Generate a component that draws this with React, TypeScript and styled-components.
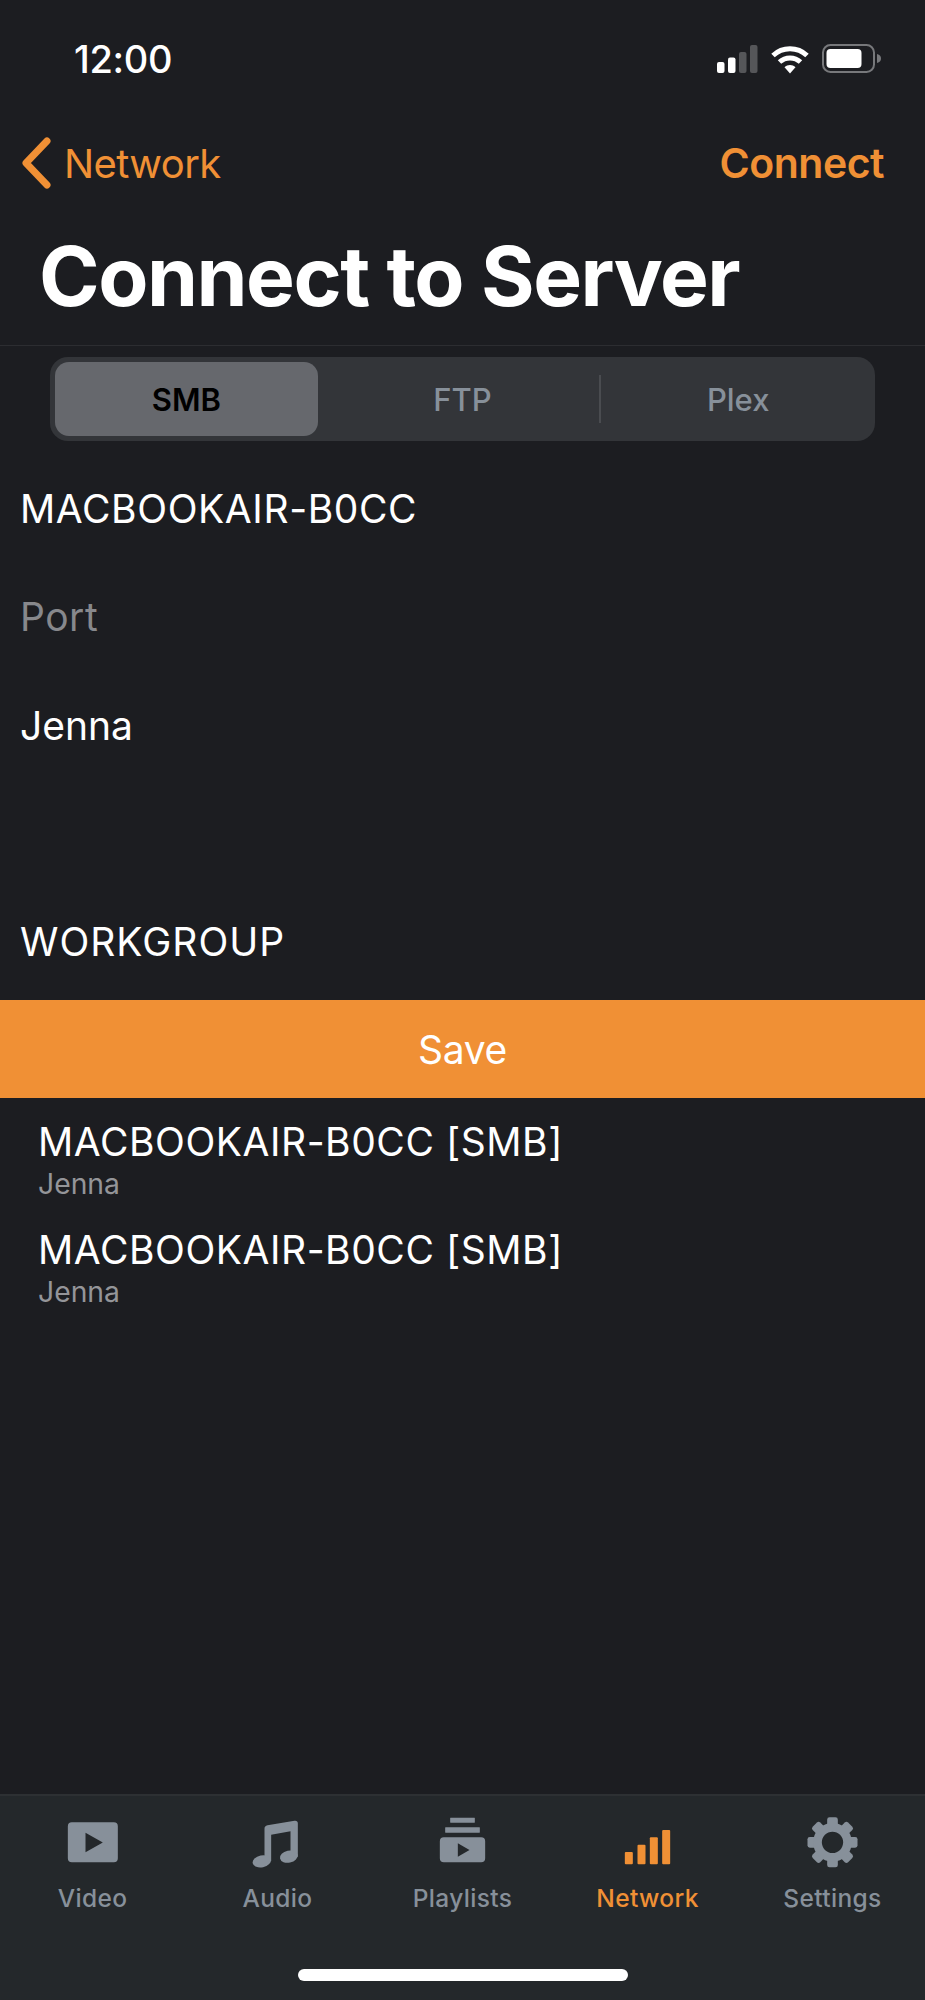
import React from "react";
import styled, { createGlobalStyle } from "styled-components";

const Global = createGlobalStyle`
  html, body { margin: 0; padding: 0; background: #1c1d21; }
  * { box-sizing: border-box; }
`;

const ORANGE = "#f09035";
const GRAY = "#87909a";
const FONT = `Inter, "Liberation Sans", sans-serif`;

const Screen = styled.div`
  width: 925px;
  height: 2000px;
  background: #1c1d21;
  color: #fff;
  font-family: ${FONT};
  display: flex;
  flex-direction: column;
  overflow: hidden;
`;

const StatusBar = styled.div`
  height: 117px;
  padding: 0 43px 0 74px;
  display: flex;
  align-items: center;
  justify-content: space-between;
`;

const Time = styled.span`
  font-size: 38px;
  font-weight: 500;
  letter-spacing: -0.3px;
  line-height: 1;
`;

const StatusIcons = styled.div`
  display: flex;
  align-items: center;
  gap: 13px;
`;

const NavBar = styled.div`
  height: 92px;
  padding: 0 41px 0 21px;
  display: flex;
  align-items: center;
  justify-content: space-between;
`;

const Back = styled.div`
  display: flex;
  align-items: center;
  gap: 13px;
  color: ${ORANGE};
  font-size: 40px;
  font-weight: 400;
  letter-spacing: -0.6px;
`;

const Action = styled.div`
  color: ${ORANGE};
  font-size: 41px;
  font-weight: 600;
  letter-spacing: -0.5px;
`;

const TitleBar = styled.div`
  height: 137px;
  padding: 0 0 0 39px;
  display: flex;
  align-items: center;
  border-bottom: 1px solid #2c2d31;
`;

const Title = styled.h1`
  margin: 0;
  font-size: 82px;
  font-weight: 700;
  letter-spacing: -1.5px;
  line-height: 1;
`;

const Segmented = styled.div`
  margin: 11px 50px 0;
  height: 84px;
  padding: 5px;
  border-radius: 18px;
  background: #333539;
  display: grid;
  grid-template-columns: repeat(3, 1fr);
`;

const Segment = styled.div<{ $active?: boolean; $divided?: boolean }>`
  position: relative;
  display: flex;
  align-items: center;
  justify-content: center;
  margin-right: ${(p) => (p.$active ? "9px" : "0")};
  padding-left: ${(p) => (p.$divided ? "8px" : "0")};
  font-size: 31px;
  font-weight: ${(p) => (p.$active ? 600 : 500)};
  color: ${(p) => (p.$active ? "#000" : GRAY)};
  background: ${(p) => (p.$active ? "#66686d" : "transparent")};
  border-radius: 14px;
  ${(p) =>
    p.$divided
      ? `&::before { content: ""; position: absolute; left: 1px; top: 13px; bottom: 13px; width: 2px; background: #4a4c50; }`
      : ""}
`;

const Form = styled.div`
  margin-top: 13.5px;
  padding-bottom: 4.25px;
  display: flex;
  flex-direction: column;
`;

const Field = styled.div<{ $placeholder?: boolean; $tracking?: number }>`
  height: 108.25px;
  padding-left: 20px;
  display: flex;
  align-items: center;
  font-size: 39px;
  font-weight: 400;
  letter-spacing: ${(p) => p.$tracking ?? 0}px;
  color: ${(p) => (p.$placeholder ? "#87888c" : "#fff")};
`;

const SaveBar = styled.div`
  height: 98px;
  background: ${ORANGE};
  display: flex;
  align-items: center;
  justify-content: center;
  font-size: 39px;
  letter-spacing: -0.3px;
`;

const List = styled.div`
  padding-top: 17px;
  display: flex;
  flex-direction: column;
`;

const Row = styled.div`
  height: 108px;
  padding-left: 38px;
  display: flex;
  flex-direction: column;
`;

const RowTitle = styled.div`
  font-size: 39px;
  line-height: 54px;
  letter-spacing: 0.55px;
`;

const RowSub = styled.div`
  font-size: 28.3px;
  line-height: 30px;
  color: #949599;
`;

const TabBar = styled.div`
  margin-top: auto;
  height: 206px;
  background: #24282b;
  border-top: 2px solid #2d3033;
  position: relative;
  display: grid;
  grid-template-columns: repeat(5, 1fr);
  align-items: start;
`;

const Tab = styled.div<{ $active?: boolean }>`
  display: flex;
  flex-direction: column;
  align-items: center;
  color: ${(p) => (p.$active ? ORANGE : GRAY)};
`;

const IconBox = styled.svg`
  width: 56px;
  height: 56px;
  margin-top: 19px;
  display: block;
`;

const TabLabel = styled.span`
  margin-top: 12px;
  font-size: 24.5px;
  font-weight: 500;
  line-height: 30px;
  letter-spacing: 0.35px;
`;

const HomeIndicator = styled.div`
  position: absolute;
  left: 298px;
  bottom: 19px;
  width: 330px;
  height: 12px;
  border-radius: 6px;
  background: #fff;
`;

const Signal = () => (
  <svg width="41" height="28" viewBox="0 0 41 28">
    <rect x="0" y="17" width="7.5" height="11" rx="2" fill="#fff" />
    <rect x="11" y="12.5" width="7.5" height="15.5" rx="2" fill="#fff" />
    <rect x="22" y="7" width="7.5" height="21" rx="2" fill="#555659" />
    <rect x="33" y="0" width="7.5" height="28" rx="2" fill="#555659" />
  </svg>
);

const Wifi = () => (
  <svg width="38" height="30" viewBox="0 0 38 30" fill="none">
    <path d="M2 11.5C11.5 2.5 26.5 2.5 36 11.5" stroke="#fff" strokeWidth="5" />
    <path d="M8.5 18C14.5 12.5 23.5 12.5 29.5 18" stroke="#fff" strokeWidth="5" />
    <path d="M13.5 23.2L19 29.5L24.5 23.2C21.5 20.2 16.5 20.2 13.5 23.2Z" fill="#fff" />
  </svg>
);

const Battery = () => (
  <svg width="60" height="30" viewBox="0 0 60 30" fill="none">
    <rect x="1" y="1" width="51" height="27" rx="7.5" stroke="#77787b" strokeWidth="2" />
    <rect x="4.5" y="5" width="35" height="19" rx="4" fill="#fff" />
    <path d="M55 10C58 10.8 59 12.5 59 14.5S58 18.2 55 19Z" fill="#77787b" />
  </svg>
);

const Chevron = () => (
  <svg width="30" height="52" viewBox="0 0 30 52" fill="none">
    <path d="M26 4L5 26L26 48" stroke={ORANGE} strokeWidth="7" strokeLinecap="round" strokeLinejoin="round" />
  </svg>
);

const VideoIcon = () => (
  <IconBox viewBox="73.5 45 168 168">
    <path
      fillRule="evenodd"
      fill="currentColor"
      d="M94 67H220Q232 67 232 79V175Q232 187 220 187H94Q82 187 82 175V79Q82 67 94 67ZM135 98V157L187 127.5Z"
    />
  </IconBox>
);

const AudioIcon = () => (
  <IconBox viewBox="628.5 45 168 168" fill="currentColor">
    <path d="M672 86Q672 78 681 76L762 62Q772 61 772 70V170H750V94L692 104V183H672Z" />
    <ellipse cx="664" cy="184" rx="28" ry="18" transform="rotate(-12 664 184)" />
    <ellipse cx="745" cy="170" rx="27" ry="18" transform="rotate(-12 745 170)" />
  </IconBox>
);

const PlaylistIcon = () => (
  <IconBox viewBox="1183.5 45 168 168" fill="currentColor">
    <rect x="1229" y="53" width="74" height="15" rx="1" />
    <rect x="1214" y="82" width="104" height="16" rx="1" />
    <path
      fillRule="evenodd"
      d="M1210 112H1322Q1334 112 1334 124V175Q1334 187 1322 187H1210Q1198 187 1198 175V124Q1198 112 1210 112ZM1252 130V170L1287 150Z"
    />
  </IconBox>
);

const NetworkIcon = () => (
  <IconBox viewBox="58.5 45 168 168" fill="currentColor">
    <rect x="73" y="156" width="24" height="37" rx="3" />
    <rect x="111" y="134" width="24" height="59" rx="3" />
    <rect x="148" y="112" width="24" height="81" rx="3" />
    <rect x="185" y="90" width="24" height="103" rx="3" />
  </IconBox>
);

const GearIcon = () => {
  const teeth = [0, 45, 90, 135, 180, 225, 270, 315];
  return (
    <IconBox viewBox="613.5 45 168 168" fill="currentColor">
      {teeth.map((a) => (
        <rect key={a} x="680" y="52" width="32" height="30" rx="7" transform={`rotate(${a} 696 127)`} />
      ))}
      <circle cx="696" cy="127" r="45" fill="none" stroke="currentColor" strokeWidth="26" />
    </IconBox>
  );
};

export default function App() {
  return (
    <Screen>
      <Global />
      <StatusBar>
        <Time>12:00</Time>
        <StatusIcons>
          <Signal />
          <Wifi />
          <Battery />
        </StatusIcons>
      </StatusBar>
      <NavBar>
        <Back>
          <Chevron />
          Network
        </Back>
        <Action>Connect</Action>
      </NavBar>
      <TitleBar>
        <Title>Connect to Server</Title>
      </TitleBar>
      <Segmented>
        <Segment $active>SMB</Segment>
        <Segment>FTP</Segment>
        <Segment $divided>Plex</Segment>
      </Segmented>
      <Form>
        <Field $tracking={0.6}>MACBOOKAIR-B0CC</Field>
        <Field $placeholder $tracking={0.5}>Port</Field>
        <Field>Jenna</Field>
        <Field />
        <Field $tracking={1}>WORKGROUP</Field>
      </Form>
      <SaveBar>Save</SaveBar>
      <List>
        <Row>
          <RowTitle>MACBOOKAIR-B0CC [SMB]</RowTitle>
          <RowSub>Jenna</RowSub>
        </Row>
        <Row>
          <RowTitle>MACBOOKAIR-B0CC [SMB]</RowTitle>
          <RowSub>Jenna</RowSub>
        </Row>
      </List>
      <TabBar>
        <Tab>
          <VideoIcon />
          <TabLabel>Video</TabLabel>
        </Tab>
        <Tab>
          <AudioIcon />
          <TabLabel>Audio</TabLabel>
        </Tab>
        <Tab>
          <PlaylistIcon />
          <TabLabel>Playlists</TabLabel>
        </Tab>
        <Tab $active>
          <NetworkIcon />
          <TabLabel>Network</TabLabel>
        </Tab>
        <Tab>
          <GearIcon />
          <TabLabel>Settings</TabLabel>
        </Tab>
        <HomeIndicator />
      </TabBar>
    </Screen>
  );
}
